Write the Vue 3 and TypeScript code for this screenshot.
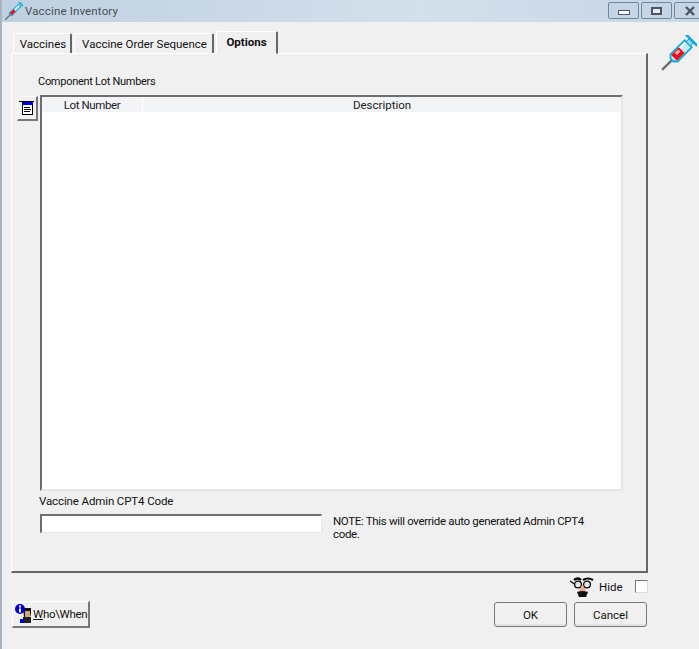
<script setup lang="ts">
const tabs = [
  { label: 'Vaccines', width: 59, active: false },
  { label: 'Vaccine Order Sequence', width: 140, active: false },
  { label: 'Options', width: 62, active: true },
]
</script>

<template>
  <div class="window">
    <header class="titlebar">
      <div class="title">
        <svg class="title-icon" width="18" height="18" viewBox="0 0 36 36">
          <g transform="rotate(-45 18 18)">
            <path d="M-8 18 H8" stroke="#666" stroke-width="2.4" />
            <rect x="8" y="14.5" width="26" height="7" fill="#c4ecf8" stroke="#12a8d8" stroke-width="2" />
            <rect x="9" y="15" width="11" height="6" fill="#e8101c" />
            <path d="M38 11 V25" stroke="#12a8d8" stroke-width="3" />
          </g>
        </svg>
        <span>Vaccine Inventory</span>
      </div>
      <div class="controls">
        <button class="ctl"><span class="min"></span></button>
        <button class="ctl"><span class="max"></span></button>
        <button class="ctl close">
          <svg width="12" height="10" viewBox="0 0 12 10"><path d="M2 1 L10 9 M10 1 L2 9" stroke="#4a5668" stroke-width="2.4" /></svg>
        </button>
      </div>
    </header>

    <div class="body">
      <div class="main">
        <div class="tabs">
          <div
            v-for="t in tabs"
            :key="t.label"
            class="tab"
            :class="{ active: t.active }"
            :style="{ width: t.width + 'px' }"
          >{{ t.label }}</div>
        </div>
        <section class="panel">
          <div class="group-label">Component Lot Numbers</div>
          <div class="grid-row">
            <button class="tool">
              <svg width="16" height="15" viewBox="0 0 16 15">
                <rect x="0" y="0" width="15" height="1" fill="#000" />
                <rect x="3" y="1" width="11" height="3" fill="#0000e0" />
                <rect x="3" y="1" width="1" height="13" fill="#000" />
                <rect x="13" y="4" width="1" height="10" fill="#000" />
                <rect x="4" y="4" width="9" height="9" fill="#fff" />
                <rect x="3" y="13" width="11" height="1" fill="#000" />
                <path d="M5 6.5 H11 M5 8.5 H12 M5 10.5 H11" stroke="#000" />
              </svg>
            </button>
            <div class="grid">
              <div class="grid-head">
                <div class="col lot">Lot Number</div>
                <div class="col desc">Description</div>
              </div>
            </div>
          </div>
          <div class="cpt">
            <div class="cpt-label">Vaccine Admin CPT4 Code</div>
            <div class="cpt-row">
              <input class="cpt-input" type="text" />
              <p class="note">NOTE: This will override auto generated Admin CPT4 code.</p>
            </div>
          </div>
        </section>
      </div>

      <aside class="side">
        <svg width="36" height="36" viewBox="0 0 36 36">
          <g transform="rotate(-45 18 18)">
            <path d="M-6 18 H8" stroke="#707070" stroke-width="2.4" />
            <path d="M8 16 L11 13 H31 V23 H11 L8 20 Z" fill="#c4ecf8" stroke="#12a8d8" stroke-width="1.8" />
            <rect x="11" y="14" width="11" height="8" fill="#e8101c" />
            <rect x="15" y="15" width="5" height="3" fill="#f8b0b0" />
            <path d="M22 15 H30" stroke="#fff" stroke-width="2" />
            <rect x="31" y="15" width="4" height="6" fill="#8edcf2" stroke="#12a8d8" />
            <path d="M36 10 V26" stroke="#12a8d8" stroke-width="2.6" />
          </g>
        </svg>
      </aside>
    </div>

    <div class="hide-row">
      <svg class="hide-icon" width="24" height="20" viewBox="0 0 24 20">
        <path d="M0 4 L6 8" stroke="#000" stroke-width="1.4" />
        <path d="M4 3 Q8 0 11 3 M13 3 Q18 0 23 3" stroke="#000" stroke-width="2.2" fill="none" />
        <circle cx="8" cy="7.5" r="3.4" fill="#dfe7e7" stroke="#000" stroke-width="1.3" />
        <circle cx="17" cy="7.5" r="3.4" fill="#dfe7e7" stroke="#000" stroke-width="1.3" />
        <path d="M12.5 7 L9 14 H16 Z" fill="#eda98c" />
        <path d="M7 15 Q12 13 18 15 L16 20 H9 Z" fill="#111" />
      </svg>
      <span class="hide-label">Hide</span>
      <span class="check"></span>
    </div>

    <footer class="footer">
      <button class="who">
        <svg class="who-icon" width="18" height="20" viewBox="0 0 18 20">
          <path d="M8 4 H16 V10 L15 13 H9 Z" fill="#111" />
          <rect x="10" y="7" width="5" height="6" fill="#d9a77c" />
          <rect x="8" y="13" width="8" height="6" fill="#222" />
          <rect x="5" y="15" width="4" height="4" fill="#0000d0" />
          <circle cx="5" cy="5" r="5" fill="#0000d0" />
          <rect x="4" y="1.5" width="2" height="2" fill="#fff" />
          <rect x="4" y="4.5" width="2" height="4" fill="#fff" />
        </svg>
        <span class="who-text"><u>W</u>ho\When</span>
      </button>
      <div class="actions">
        <button class="btn">OK</button>
        <button class="btn">Cancel</button>
      </div>
    </footer>
  </div>
</template>

<style>
html, body { margin: 0; background: #f0f0f0; }
</style>

<style scoped>
.window {
  width: 699px;
  height: 649px;
  overflow: hidden;
  box-sizing: border-box;
  background: #f0f0f0;
  border-left: 2px solid #a9b4c1;
  font-family: Roboto, "Liberation Sans", sans-serif;
  font-size: 11.5px;
  color: #111;
  display: flex;
  flex-direction: column;
}
button { font: inherit; color: inherit; padding: 0; margin: 0; }
.titlebar {
  height: 22px;
  margin-left: -2px;
  flex: none;
  display: flex;
  justify-content: space-between;
  background: linear-gradient(90deg, #bfd0e1, #d3e0ec 60%, #c6d6e6);
}
.title { display: flex; align-items: center; gap: 2px; padding-left: 5px; color: #4a4f55; letter-spacing: 0.15px; }
.controls { display: flex; gap: 2px; padding-top: 2px; margin-right: -6px; }
.ctl {
  width: 31px; height: 17px;
  border: 1px solid #7286a2;
  border-radius: 2px;
  background: #c6d5e4;
  display: flex; align-items: center; justify-content: center;
}
.min { width: 10px; height: 3px; border: 1px solid #4a5668; background: #fff; margin-top: 4px; }
.max { width: 7px; height: 4px; border: 2px solid #4a5668; background: #e3ebf3; }
.body { display: flex; flex: none; padding-left: 9px; padding-top: 8px; }
.main { width: 637px; }
.tabs { display: flex; align-items: flex-end; height: 24px; padding-left: 2px; gap: 2px; margin-bottom: -1px; position: relative; }
.tab {
  height: 20px;
  line-height: 20px;
  box-sizing: border-box;
  text-align: center;
  padding-left: 2px;
  background: #f0f0f0;
  border: 1px solid #fff;
  border-right: 2px solid #666;
  border-bottom: none;
  border-radius: 2px 2px 0 0;
  white-space: nowrap;
  margin-bottom: 1px;
}
.tab.active { height: 23px; line-height: 20px; font-weight: 700; padding-left: 0; margin-bottom: 0; border-bottom: 1px solid #f0f0f0; }
.panel {
  height: 520px;
  box-sizing: border-box;
  border: 1px solid #fff;
  border-right: 2px solid #666;
  border-bottom: 2px solid #666;
  padding: 21px 0 0 5px;
}
.group-label { padding-left: 21px; height: 20px; font-size: 11px; letter-spacing: -0.28px; }
.grid-row { display: flex; align-items: flex-start; gap: 2px; }
.tool {
  width: 21px; height: 25px;
  margin-top: 1px;
  background: #f0f0f0;
  border: 1px solid #fff;
  border-right: 2px solid #777;
  border-bottom: 2px solid #777;
  display: flex; align-items: center; justify-content: center;
}
.grid {
  width: 583px; height: 396px;
  box-sizing: border-box;
  background: #fff;
  border: 2px solid #6e6e6e;
  border-right: 2px solid #e6e6e6;
  border-bottom: 2px solid #e6e6e6;
}
.grid-head { display: flex; height: 15px; background: #f3f4f6; color: #1a1a2a; line-height: 17px; }
.col { text-align: center; }
.lot { width: 100px; border-right: 1px solid #fff; letter-spacing: -0.4px; }
.desc { flex: 1; }
.cpt { padding-left: 22px; margin-top: 3px; }
.cpt-label { height: 20px; letter-spacing: -0.12px; }
.cpt-row { display: flex; gap: 11px; margin-left: 1px; }
.cpt-input {
  width: 282px; height: 19px;
  box-sizing: border-box;
  margin: 0; padding: 0;
  background: #fff;
  border: 2px solid #6e6e6e;
  border-right: 1px solid #e6e6e6;
  border-bottom: 1px solid #e6e6e6;
}
.note { margin: 0; width: 262px; line-height: 13px; padding-top: 1px; letter-spacing: -0.33px; }
.side { padding: 5px 0 0 13px; }
.hide-row {
  display: flex; align-items: center; height: 20px; margin-top: 4px;
  padding-left: 568px;
  flex: none;
}
.hide-icon { flex: none; }
.hide-label { margin-left: 5px; width: 36px; }
.check {
  width: 11px; height: 11px;
  margin-top: -2px;
  background: #fff;
  border: 1px solid #777;
  border-right-color: #ddd;
  border-bottom-color: #ddd;
}
.footer { display: flex; justify-content: space-between; padding: 0 52px 0 10px; flex: none; margin-top: 4px; }
.who {
  width: 78px; height: 27px;
  background: #f0f0f0;
  border: 1px solid #fff;
  border-right: 2px solid #777;
  border-bottom: 2px solid #777;
  display: flex; align-items: center; gap: 0; padding-left: 2px; box-sizing: border-box;
  white-space: nowrap;
}
.who-icon { flex: none; }
.who-text { letter-spacing: -0.3px; }
.actions { display: flex; gap: 7px; margin-top: 1px; }
.btn {
  width: 73px; height: 25px;
  border: 1px solid #777;
  border-radius: 3px;
  background: #f0f0f0;
  box-shadow: inset 0 -2px 0 #e0e0e0;
}
</style>
